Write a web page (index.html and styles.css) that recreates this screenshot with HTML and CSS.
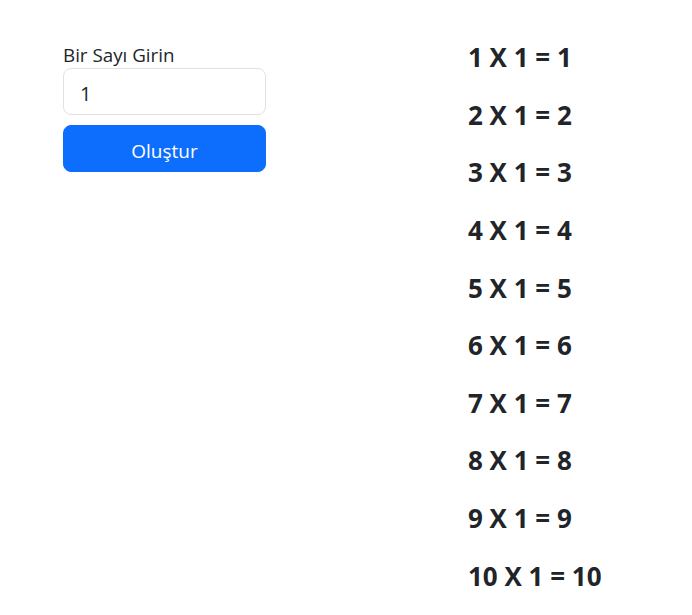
FILE: index.html
```html
<!DOCTYPE html>
<html lang="tr">
<head>
<meta charset="utf-8">
<title>Çarpım Tablosu</title>
<link rel="stylesheet" href="styles.css">
</head>
<body>
<div class="page">
  <form class="form-col" onsubmit="return false">
    <label class="form-label" for="sayi">Bir Sayı Girin</label>
    <input class="form-input" id="sayi" type="text" value="1">
    <button class="btn-primary" type="submit">Oluştur</button>
  </form>
  <div class="results">
    <div class="result-row">1 X 1 = 1</div>
    <div class="result-row">2 X 1 = 2</div>
    <div class="result-row">3 X 1 = 3</div>
    <div class="result-row">4 X 1 = 4</div>
    <div class="result-row">5 X 1 = 5</div>
    <div class="result-row">6 X 1 = 6</div>
    <div class="result-row">7 X 1 = 7</div>
    <div class="result-row">8 X 1 = 8</div>
    <div class="result-row">9 X 1 = 9</div>
    <div class="result-row">10 X 1 = 10</div>
  </div>
</div>
</body>
</html>
```
FILE: styles.css
```css
html, body {
  margin: 0;
  padding: 0;
  background: #ffffff;
}
body {
  font-family: "Open Sans", "Noto Sans", sans-serif;
  color: #212529;
}
.page {
  display: flex;
  align-items: flex-start;
  padding: 42px 0 0 63px;
  gap: 202px;
}
.form-col {
  width: 203px;
  display: flex;
  flex-direction: column;
  margin: 0;
}
.form-label {
  font-size: 18.8px;
  line-height: 26px;
  height: 26px;
  white-space: nowrap;
}
.form-input {
  box-sizing: border-box;
  height: 47px;
  width: 100%;
  margin: 0;
  padding: 3px 16px 0;
  font-family: inherit;
  font-size: 20px;
  color: #212529;
  border: 1px solid #dee2e6;
  border-radius: 8px;
  background: #fff;
  outline: none;
}
.btn-primary {
  box-sizing: border-box;
  height: 47px;
  width: 100%;
  margin-top: 10px;
  padding: 4px 0 0;
  font-family: inherit;
  font-size: 19px;
  color: #fff;
  background: #0d6efd;
  border: 1px solid #0d6efd;
  border-radius: 8px;
}
.results {
  display: flex;
  flex-direction: column;
  margin-top: -12.8px;
}
.result-row {
  font-size: 26px;
  font-weight: 700;
  line-height: 57.6px;
  height: 57.6px;
  white-space: nowrap;
}
```
